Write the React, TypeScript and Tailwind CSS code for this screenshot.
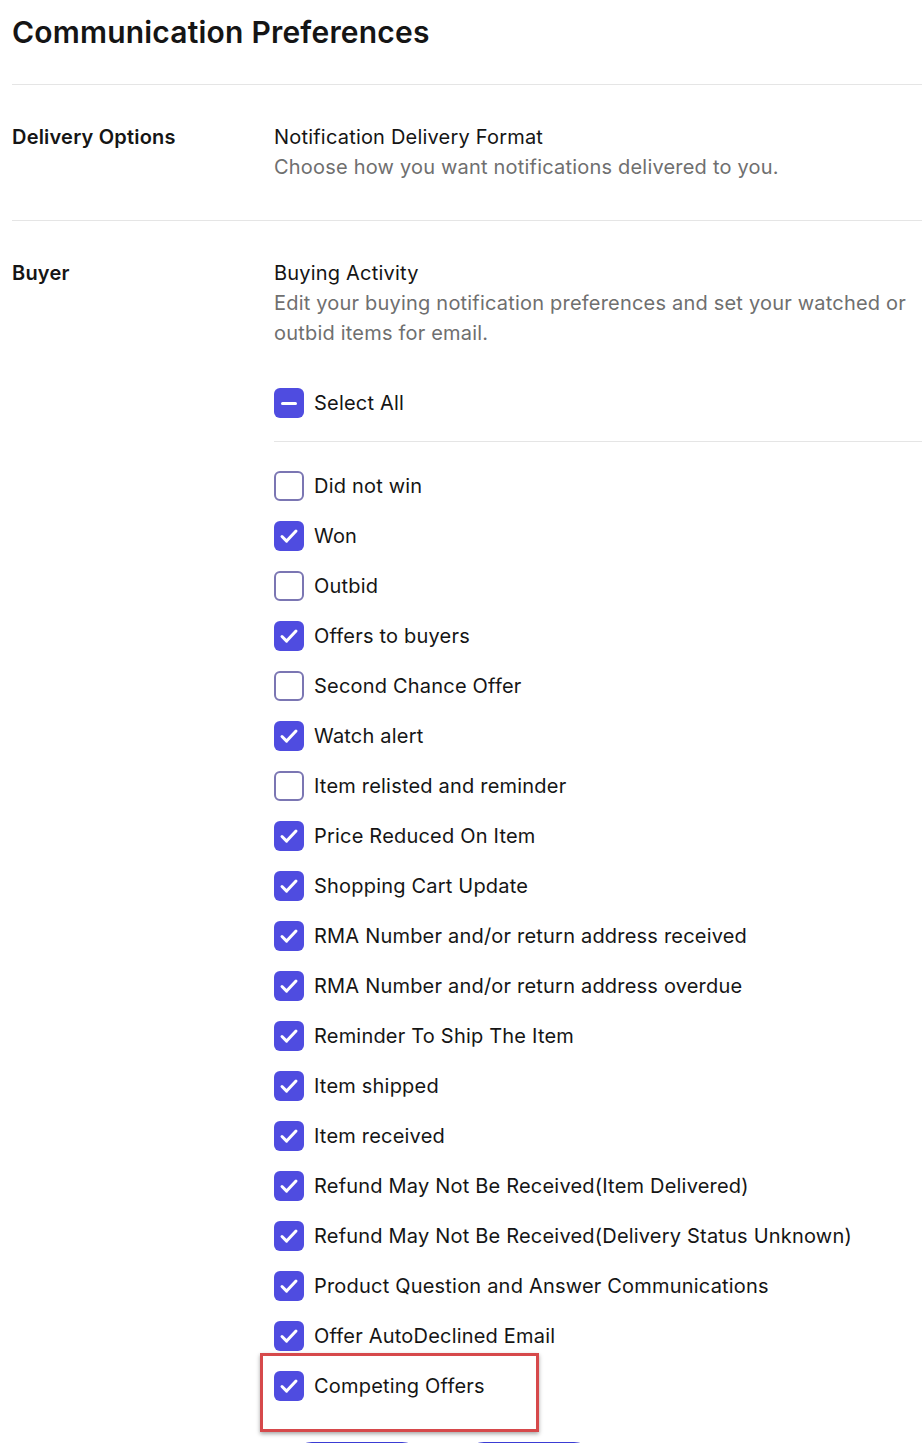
import { useState } from "react";

const items: Array<[string, boolean]> = [
  ["Did not win", false],
  ["Won", true],
  ["Outbid", false],
  ["Offers to buyers", true],
  ["Second Chance Offer", false],
  ["Watch alert", true],
  ["Item relisted and reminder", false],
  ["Price Reduced On Item", true],
  ["Shopping Cart Update", true],
  ["RMA Number and/or return address received", true],
  ["RMA Number and/or return address overdue", true],
  ["Reminder To Ship The Item", true],
  ["Item shipped", true],
  ["Item received", true],
  ["Refund May Not Be Received(Item Delivered)", true],
  ["Refund May Not Be Received(Delivery Status Unknown)", true],
  ["Product Question and Answer Communications", true],
  ["Offer AutoDeclined Email", true],
  ["Competing Offers", true],
];

const Box = ({ state }: { state: "on" | "off" | "some" }) => {
  if (state === "off") {
    return <span className="w-[30px] h-[30px] rounded-[6px] border-2 border-[#7b76b3] bg-white shrink-0" />;
  }
  return (
    <span className="w-[30px] h-[30px] rounded-[6px] bg-[#4f4ce0] shrink-0 flex items-center justify-center">
      {state === "on" ? (
        <svg width="22" height="22" viewBox="0 0 22 22" fill="none">
          <path d="M4 11.5l4.6 4.6L18 6" stroke="white" strokeWidth="3" strokeLinecap="round" strokeLinejoin="round" />
        </svg>
      ) : (
        <span className="w-[16px] h-[3px] rounded-full bg-white" />
      )}
    </span>
  );
};

export default function App() {
  const [checked, setChecked] = useState(items.map((i) => i[1]));

  return (
    <div className="bg-white min-h-screen pl-[12px] text-[#151515] font-['Inter','Liberation_Sans',sans-serif]">
      <h1 className="pt-[13px] text-[30px] leading-[38px] font-semibold tracking-[0.2px] mb-[33px]">
        Communication Preferences
      </h1>

      {/* Delivery options */}
      <div className="border-t border-[#e5e5e5] pt-[37px] pb-[38px] flex tracking-[0.2px]">
        <div className="w-[262px] shrink-0 text-[20px] leading-[30px] font-semibold">Delivery Options</div>
        <div className="text-[20px] leading-[30px]">
          <div>Notification Delivery Format</div>
          <div className="text-[#6f6f6f]">Choose how you want notifications delivered to you.</div>
        </div>
      </div>

      {/* Buyer */}
      <div className="border-t border-[#e5e5e5] pt-[37px] flex tracking-[0.2px]">
        <div className="w-[262px] shrink-0 text-[20px] leading-[30px] font-semibold">Buyer</div>
        <div className="flex-1 text-[20px] leading-[30px]">
          <div>Buying Activity</div>
          <div className="text-[#6f6f6f] pr-[12px]">
            Edit your buying notification preferences and set your watched or outbid items for email.
          </div>

          <div className="mt-[30px] h-[50px] flex items-center gap-[10px]">
            <Box state="some" />
            <span>Select All</span>
          </div>
          <div className="mt-[13px] border-t border-[#e5e5e5]" />

          <div className="pt-[19px]">
            {items.map(([label], i) => (
              <div
                key={label}
                className="relative h-[50px] flex items-center gap-[10px] cursor-pointer"
                onClick={() => setChecked((c) => c.map((v, j) => (j === i ? !v : v)))}
              >
                <Box state={checked[i] ? "on" : "off"} />
                <span>{label}</span>
                {label === "Competing Offers" && (
                  <div className="absolute left-[-14px] top-[-8px] w-[279px] h-[79px] border-[3px] border-[#d6494b] shadow-[0_2px_4px_rgba(0,0,0,0.35)] pointer-events-none" />
                )}
              </div>
            ))}
          </div>

          <div className="mt-[31px] ml-[16px] flex gap-[38px]">
            <button aria-label="Cancel" className="w-[134px] h-[44px] rounded-full border-2 border-[#3b3cd4]" />
            <button aria-label="Save" className="w-[134px] h-[44px] rounded-full border-2 border-[#3b3cd4] bg-[#3b3cd4]" />
          </div>
        </div>
      </div>
    </div>
  );
}
